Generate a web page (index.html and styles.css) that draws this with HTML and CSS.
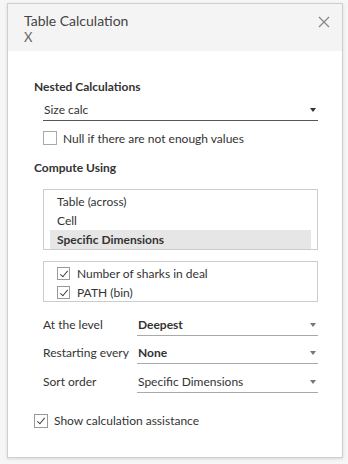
FILE: index.html
```html
<!DOCTYPE html>
<html>

<head>
	<meta charset="UTF-8">
	<title>Table Calculation</title>
	<link rel="stylesheet" href="styles.css">
</head>

<body>
	<section class="dialog">
		<header class="head">
			<div class="head-text">
				<div class="head-title">Table Calculation</div>
				<div class="head-sub">X</div>
			</div>
			<span class="close">
				<svg width="12" height="12" viewBox="0 0 12 12"><path d="M1 1L11 11M11 1L1 11" stroke="#888" stroke-width="1.3" fill="none"/></svg>
			</span>
		</header>

		<div class="body">
			<h2 class="label">Nested Calculations</h2>
			<div class="select nested">
				<span>Size calc</span>
				<i class="arrow dark"></i>
			</div>
			<label class="check null">
				<span class="box"></span>
				Null if there are not enough values
			</label>

			<h2 class="label compute">Compute Using</h2>
			<ul class="list">
				<li>Table (across)</li>
				<li>Cell</li>
				<li class="active">Specific Dimensions</li>
			</ul>

			<ul class="dims">
				<li><span class="box on"></span>Number of sharks in deal</li>
				<li><span class="box on"></span>PATH (bin)</li>
			</ul>

			<div class="rows">
				<div class="row">
					<span class="row-name">At the level</span>
					<div class="select"><b>Deepest</b><i class="arrow"></i></div>
				</div>
				<div class="row">
					<span class="row-name">Restarting every</span>
					<div class="select"><b>None</b><i class="arrow"></i></div>
				</div>
				<div class="row">
					<span class="row-name">Sort order</span>
					<div class="select"><span>Specific Dimensions</span><i class="arrow"></i></div>
				</div>
			</div>

			<label class="check assist">
				<span class="box on"></span>
				Show calculation assistance
			</label>
		</div>
	</section>
</body>

</html>
```

FILE: styles.css
```css
body,
h2,
ul {
	margin: 0;
	padding: 0;
}

ul {
	list-style: none;
}

body {
	width: 348px;
	height: 464px;
	background: #f6f6f6;
	font-family: Lato, "Liberation Sans", sans-serif;
	color: #333;
	font-size: 12px;
	padding: 3px 5px 6px 7px;
	box-sizing: border-box;
}

.dialog {
	height: 455px;
	background: #fff;
	border: 1px solid #cfcfcf;
	box-shadow: 0 1px 3px rgba(0, 0, 0, .12);
	box-sizing: border-box;
}

.head {
	display: flex;
	justify-content: space-between;
	background: #f4f4f4;
	height: 47px;
	padding: 9px 12px 0 16px;
	box-sizing: border-box;
}

.head-title {
	font-size: 14px;
	line-height: 16px;
	color: #444;
}

.head-sub {
	font-size: 13px;
	line-height: 16px;
	color: #666;
}

.close {
	padding-top: 3px;
}

.body {
	padding: 28px 24px 0 26px;
}

.label {
	font-size: 12px;
	font-weight: bold;
	line-height: 16px;
}

.select {
	display: flex;
	justify-content: space-between;
	align-items: flex-end;
	border-bottom: 1px solid #aaa;
	height: 22px;
	padding: 0 0 3px 1px;
	line-height: 15px;
	box-sizing: border-box;
}

.nested {
	margin: 4px 0 0 9px;
	border-bottom-color: #555;
}

.arrow {
	width: 0;
	height: 0;
	border-left: 3.5px solid transparent;
	border-right: 3.5px solid transparent;
	border-top: 4px solid #777;
	margin: 0 2px 5px 0;
}

.arrow.dark {
	border-top-color: #333;
}

.check {
	display: flex;
	align-items: center;
}

.box {
	display: inline-block;
	width: 13px;
	height: 13px;
	border: 1px solid #999;
	box-sizing: border-box;
	margin-right: 6px;
	position: relative;
}

.box.on::after {
	content: "";
	position: absolute;
	left: 4px;
	top: 1px;
	width: 3px;
	height: 7px;
	border: solid #444;
	border-width: 0 1px 1px 0;
	transform: rotate(40deg);
}

.null {
	margin: 10px 0 0 9px;
	height: 14px;
}

.null .box {
	width: 14px;
	height: 14px;
	border-color: #aaa;
}

.compute {
	margin-top: 15px;
}

.list {
	margin: 13px 0 0 9px;
	height: 61px;
	border: 1px solid #ccc;
	padding: 2px 6px 0;
	box-sizing: border-box;
}

.list li {
	line-height: 19px;
	padding-left: 7px;
}

.list .active {
	background: #e6e6e6;
	font-weight: bold;
}

.dims {
	margin: 11px 0 0 9px;
	border: 1px solid #ccc;
	height: 41px;
	padding: 2px 0 0 13px;
	box-sizing: border-box;
}

.dims li {
	display: flex;
	align-items: center;
	height: 19px;
}

.dims .box {
	margin-right: 7px;
}

.rows {
	margin: 5px 0 0 9px;
}

.row {
	display: flex;
	height: 28.5px;
}

.row-name {
	width: 94px;
	align-self: flex-end;
	line-height: 15px;
	padding-bottom: 4px;
}

.row .select {
	flex: 1;
	height: 28.5px;
}

.assist {
	margin-top: 21px;
	height: 14px;
}

.assist .box {
	width: 14px;
	height: 14px;
}
```
